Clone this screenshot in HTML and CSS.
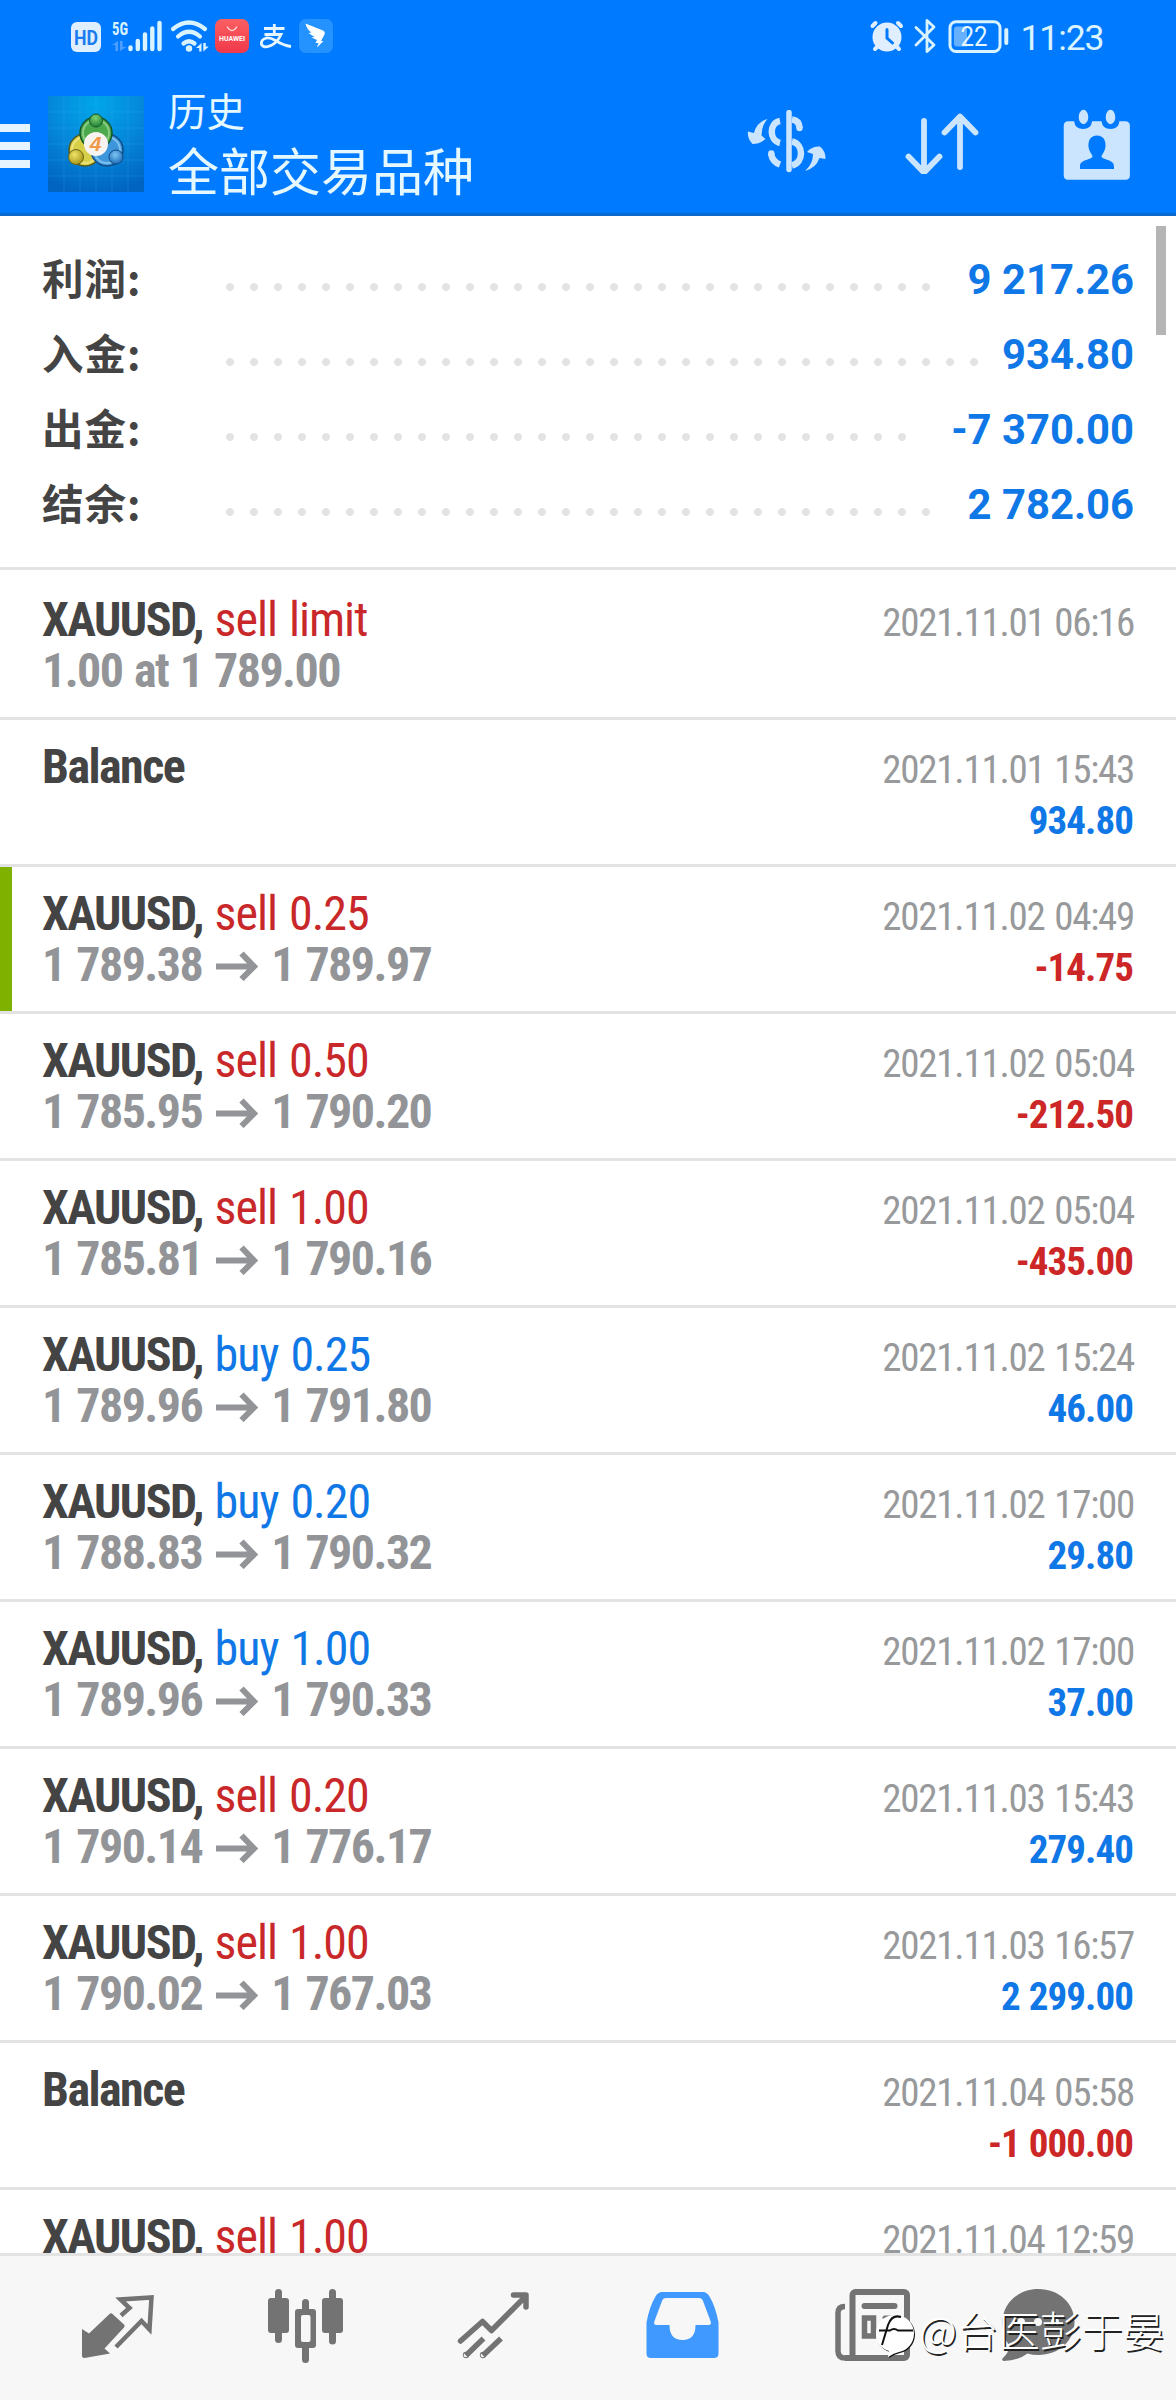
FILE: index.html
```html
<!DOCTYPE html>
<html lang="zh-CN">
<head>
<meta charset="utf-8">
<title>历史</title>
<link rel="stylesheet" href="styles.css">
</head>
<body>
<div class="screen">
  <header class="top">
    <div class="statusbar">
      <svg class="status-left" viewBox="60 10 290 54" width="290" height="54">
        <defs>
          <linearGradient id="red" x1="0" y1="0" x2="0" y2="1"><stop offset="0" stop-color="#fb5f62"/><stop offset="1" stop-color="#f0384a"/></linearGradient>
        </defs>
        <rect x="71" y="22" width="30" height="30" rx="6" fill="#e0efff"/>
        <text x="86" y="44.5" class="t-hd" textLength="24" lengthAdjust="spacingAndGlyphs">HD</text>
        <text x="112" y="34.5" class="t-5g" textLength="16" lengthAdjust="spacingAndGlyphs">5G</text>
        <g fill="#4c9fff"><path d="M112 45l6-4v10h-2.600v-6zM120 41h2.600v6h4l-6.600 4z"/></g>
        <g stroke="#d9f3ff" stroke-width="4.400" stroke-linecap="round">
          <path d="M130.500 47.500v1.500M137.800 41v8M145 34.500v14.500M152.300 28.500v20.500M159.500 23v26"/>
        </g>
        <g fill="none" stroke="#d9f3ff" stroke-width="4.200" stroke-linecap="round">
          <path d="M173 29q16-13 32 0M178 36.500q11-9.500 22 0M183.500 43.500q5.500-4.500 11 0"/>
        </g>
        <circle cx="189" cy="48.500" r="3.200" fill="#d9f3ff"/>
        <path d="M196 48l5.500-5v8.500h-2.300v-3.500zM203.300 43v8.500l5.500-5h-3v-3.500z" fill="#d9f3ff"/>
        <rect x="215" y="19" width="34" height="34" rx="7" fill="url(#red)"/>
        <path d="M227 26.500q5 8 10 0" fill="none" stroke="#ffe0e0" stroke-width="1.300"/>
        <text x="232" y="41" class="t-hw" textLength="26" lengthAdjust="spacingAndGlyphs">HUAWEI</text>
        <g fill="none" stroke="#e6f6ff" stroke-width="2.800">
          <path d="M264 28.500h20.500M274.300 24v10M264.500 34.500h16.500q-3 7-9 10.500-8 4-10.500-.500-1-5 5-6.500 4-.500 9 2.500 8 5 15.500 6" />
        </g>
        <rect x="299" y="19" width="34" height="34" rx="7" fill="#2493ff"/>
        <path d="M305.500 23.500l17.500 7q2.500 1.500 1.500 4l-3.500 6.500h2.500l-6.500 6.500 1.500-4.500h-3l1.500-3-5.500-2.500 3-.500-6-4 3-.5q-5-3.500-6-9z" fill="#fff"/>
      </svg>
      <svg class="status-right" viewBox="860 10 250 54" width="250" height="54">
        <g fill="none" stroke="#e0efff" stroke-width="4" stroke-linecap="round"><path d="M872.500 26l3-3M901 26l-3-3M875 49l3-3M899 49l-3-3"/></g>
        <circle cx="887" cy="37" r="14.500" fill="#e0efff"/>
        <path d="M887 29.500v8.500l5.500 5" fill="none" stroke="#007aff" stroke-width="3" stroke-linecap="round"/>
        <path d="M916 27.500l18 17.500-7 6.500v-31l7 6.500-18 18" fill="none" stroke="#d9f3ff" stroke-width="2.800" stroke-linecap="round" stroke-linejoin="round"/>
        <rect x="950" y="21.700" width="50" height="29.800" rx="6" fill="none" stroke="#d9f3ff" stroke-width="3"/>
        <path d="M967 26.500h-10q-3 0-3 3v14q0 3 3 3h10z" fill="#66b0ff"/>
        <rect x="1004.300" y="28" width="4" height="17" rx="2" fill="#d9f3ff"/>
        <text x="974" y="45.500" class="t-batt" textLength="27" lengthAdjust="spacingAndGlyphs">22</text>
        <text x="1020.500" y="50" class="t-clock" textLength="84" lengthAdjust="spacing">11:23</text>
      </svg>
    </div>
    <div class="titlebar">
      <div class="burger"><i></i><i></i><i></i></div>
      <svg class="logo" viewBox="0 0 96 96" width="96" height="96">
        <defs>
          <radialGradient id="bg" cx=".5" cy=".08" r=".95"><stop offset="0" stop-color="#00a6ea"/><stop offset=".5" stop-color="#0588da"/><stop offset="1" stop-color="#0064c0"/></radialGradient>
          <radialGradient id="g" cx=".45" cy=".3" r=".7"><stop offset="0" stop-color="#7fd070"/><stop offset="1" stop-color="#1f8035"/></radialGradient>
          <radialGradient id="y" cx=".4" cy=".35" r=".7"><stop offset="0" stop-color="#eee36a"/><stop offset="1" stop-color="#a39312"/></radialGradient>
          <radialGradient id="b" cx=".45" cy=".35" r=".7"><stop offset="0" stop-color="#7cc4f2"/><stop offset="1" stop-color="#1768b5"/></radialGradient>
        </defs>
        <rect width="96" height="96" fill="url(#bg)"/>
        <path d="M16 0v96M32 0v96M48 0v96M64 0v96M80 0v96M0 16h96M0 32h96M0 48h96M0 64h96M0 80h96" stroke="#3bb4ee" stroke-opacity=".2"/>
        <circle cx="37" cy="54" r="16" fill="#d8cf48" stroke="#57591c" stroke-width="1.500"/>
        <circle cx="37" cy="54" r="13" fill="none" stroke="#e9e27a" stroke-width="2"/>
        <circle cx="59" cy="54" r="16" fill="#3d96dc" stroke="#104c85" stroke-width="1.500"/>
        <circle cx="59" cy="54" r="13" fill="none" stroke="#7cc0ee" stroke-width="2"/>
        <circle cx="48" cy="37" r="16" fill="#4aa94a" stroke="#14582c" stroke-width="1.500"/>
        <circle cx="48" cy="37" r="13" fill="none" stroke="#8acb83" stroke-width="2"/>
        <circle cx="48" cy="24.500" r="6.500" fill="url(#g)" stroke="#14582c"/>
        <circle cx="28" cy="61" r="7.500" fill="url(#y)" stroke="#6b651c"/>
        <circle cx="68" cy="61" r="7" fill="url(#b)" stroke="#104c85"/>
        <circle cx="48" cy="48" r="12" fill="#f6f3f0"/>
        <text x="47.500" y="55" class="t-four">4</text>
      </svg>
      <div class="titles">
        <div class="title-small">历史</div>
        <div class="title-large">全部交易品种</div>
      </div>
      <div class="actions">
        <svg viewBox="0 0 80 64" width="80" height="64" fill="none" stroke="#cce5ff">
          <path d="M43 2.500v57" stroke-width="5.500" stroke-linecap="round"/>
          <path d="M34 11c-11 2-11 19.500 0 22M25 43.500q1.500 8.500 9 11" stroke-width="6.500"/>
          <path d="M46 9.500q7.500 1 7.500 8.500M46 31.500c12 2.500 12 21 0 24" stroke-width="6.500"/>
          <circle cx="25.300" cy="43.500" r="3.200" fill="#cce5ff" stroke="none"/><circle cx="53.500" cy="18" r="3.200" fill="#cce5ff" stroke="none"/>
          <path d="M21.500 9q-11 3-13.500 14l-6-1.500q-1 7 4.500 12.500 7 0 13-5l-4-3.500q0-10 6-16.500z" fill="#cce5ff" stroke="none"/>
          <path d="M59 61q8-7 8-17l-6-2q5-6 13-5.500 6 5 5.500 12.500l-6-1q-3.500 10-14.500 13z" fill="#cce5ff" stroke="none"/>
        </svg>
        <svg viewBox="0 0 80 64" width="80" height="64" fill="none" stroke="#cce5ff" stroke-width="5.800" stroke-linecap="round" stroke-linejoin="round">
          <path d="M22 11v51M6.500 46.500l15.500 16 15.500-16M58 57V7M42.500 22.500L58 6.500l15.500 16"/>
        </svg>
        <svg viewBox="0 0 80 76" width="80" height="76">
          <path d="M10 15.500h6q1 8.500 9.500 8.500t9.500-8.500h10q1 8.500 9.500 8.500t9.500-8.500h6q5 0 5 5v54q0 4.500-4.500 4.500h-61q-4.500 0-4.500-4.500v-54q0-5 5-5z" fill="#cce5ff" transform="translate(1 3) scale(.945 .92)"/>
          <ellipse cx="25.500" cy="13" rx="4.800" ry="7.200" fill="#cce5ff"/><ellipse cx="52.500" cy="13" rx="4.800" ry="7.200" fill="#cce5ff"/>
          <path d="M39 31.500c6.500 0 9 5 8.500 11.500-.500 4-3 7-4 9-.500 4 12.500 3 12.500 10v3h-34v-3c0-7 13-6 12.500-10-1-2-3.500-5-4-9-.500-6.500 2-11.500 8.500-11.500z" fill="#007aff"/>
        </svg>
      </div>
    </div>
  </header>

  <main class="list">
    <section class="summary">
      <div class="sum"><span class="label">利润:</span><i class="dots" style="--n:30"></i><b>9 217.26</b></div>
      <div class="sum"><span class="label">入金:</span><i class="dots" style="--n:32"></i><b>934.80</b></div>
      <div class="sum"><span class="label">出金:</span><i class="dots" style="--n:29"></i><b>-7 370.00</b></div>
      <div class="sum"><span class="label">结余:</span><i class="dots" style="--n:30"></i><b>2 782.06</b></div>
    </section>
    <svg class="defs"><symbol id="arr" viewBox="0 0 42 30"><path d="M0 15.500h37M25.500 2.500L38 15.500l-12.500 12.500" fill="none" stroke="#929497" stroke-width="6"/></symbol></svg>

    <article class="row order"><div class="line"><b>XAUUSD, <em class="neg">sell limit</em></b><time>2021.11.01 06:16</time></div><div class="line"><span class="price">1.00 at 1 789.00</span></div></article>
    <article class="row"><div class="line"><b>Balance</b><time>2021.11.01 15:43</time></div><div class="line end"><span class="amt">934.80</span></div></article>
    <article class="row marked"><div class="line"><b>XAUUSD, <em class="neg">sell 0.25</em></b><time>2021.11.02 04:49</time></div><div class="line"><span class="price">1 789.38<svg><use href="#arr"/></svg>1 789.97</span><span class="amt neg">-14.75</span></div></article>
    <article class="row"><div class="line"><b>XAUUSD, <em class="neg">sell 0.50</em></b><time>2021.11.02 05:04</time></div><div class="line"><span class="price">1 785.95<svg><use href="#arr"/></svg>1 790.20</span><span class="amt neg">-212.50</span></div></article>
    <article class="row"><div class="line"><b>XAUUSD, <em class="neg">sell 1.00</em></b><time>2021.11.02 05:04</time></div><div class="line"><span class="price">1 785.81<svg><use href="#arr"/></svg>1 790.16</span><span class="amt neg">-435.00</span></div></article>
    <article class="row"><div class="line"><b>XAUUSD, <em>buy 0.25</em></b><time>2021.11.02 15:24</time></div><div class="line"><span class="price">1 789.96<svg><use href="#arr"/></svg>1 791.80</span><span class="amt">46.00</span></div></article>
    <article class="row"><div class="line"><b>XAUUSD, <em>buy 0.20</em></b><time>2021.11.02 17:00</time></div><div class="line"><span class="price">1 788.83<svg><use href="#arr"/></svg>1 790.32</span><span class="amt">29.80</span></div></article>
    <article class="row"><div class="line"><b>XAUUSD, <em>buy 1.00</em></b><time>2021.11.02 17:00</time></div><div class="line"><span class="price">1 789.96<svg><use href="#arr"/></svg>1 790.33</span><span class="amt">37.00</span></div></article>
    <article class="row"><div class="line"><b>XAUUSD, <em class="neg">sell 0.20</em></b><time>2021.11.03 15:43</time></div><div class="line"><span class="price">1 790.14<svg><use href="#arr"/></svg>1 776.17</span><span class="amt">279.40</span></div></article>
    <article class="row"><div class="line"><b>XAUUSD, <em class="neg">sell 1.00</em></b><time>2021.11.03 16:57</time></div><div class="line"><span class="price">1 790.02<svg><use href="#arr"/></svg>1 767.03</span><span class="amt">2 299.00</span></div></article>
    <article class="row"><div class="line"><b>Balance</b><time>2021.11.04 05:58</time></div><div class="line end"><span class="amt neg">-1 000.00</span></div></article>
    <article class="row"><div class="line"><b>XAUUSD, <em class="neg">sell 1.00</em></b><time>2021.11.04 12:59</time></div></article>
    <div class="scrollbar"></div>
  </main>

  <nav class="tabs">
    <svg viewBox="24 2256 188 144">
      <path d="M82 2329l7 4.500 20.500-19.500q1.500-1.500 3 0l11.500 10.500q1.500 1.500 0 3l-19.500 21 5.500 5-25.500 4.500q-2.500 0-2.500-2.500z" fill="#737373"/>
      <path d="M121 2315.500l8.500-7.500-9-8.500 31-2-2 32-8-8.500-25.500 26" fill="none" stroke="#737373" stroke-width="4.500"/>
    </svg>
    <svg viewBox="212 2256 188 144" fill="#737373">
      <rect x="275" y="2289" width="7" height="54" rx="3.500"/><rect x="268" y="2298" width="21" height="35" rx="3"/>
      <rect x="302" y="2299" width="7" height="64" rx="3.500"/><rect x="295" y="2309" width="21" height="39" rx="3"/><rect x="301" y="2315" width="9.500" height="27" rx="2" fill="#f7f7f7"/>
      <rect x="329" y="2289" width="7" height="55.500" rx="3.500"/><rect x="322" y="2298" width="21" height="35" rx="3"/>
    </svg>
    <svg viewBox="400 2256 188 144" fill="none" stroke="#737373" stroke-width="5.500">
      <path d="M460.500 2341l22-19.500 9 9 34-34M513.500 2295h12.500v12" stroke-linecap="round" stroke-linejoin="round"/>
      <path d="M466 2355.500l17.500-17M483 2355.500l18-17"/><circle cx="466" cy="2355" r=".4"/><circle cx="483" cy="2355" r=".4"/>
    </svg>
    <svg viewBox="588 2256 188 144">
      <path fill-rule="evenodd" d="M662 2292h41q4 0 6.500 4.500 6 10 9 26v31q0 4.500-4.500 4.500h-63q-4.500 0-4.500-4.500v-31q3-16 9-26 2.500-4.500 6.500-4.500zM666 2298q-3 0-4 3l-7.500 20q-1.500 4 2 4h13q0 15 13 15t13-15h13q3.500 0 2-4l-7.500-20q-1-3-4-3z" fill="#4099ff"/>
    </svg>
    <svg viewBox="776 2256 188 144">
      <path d="M845 2306.500q-7 0-7 6.500v38q0 7 7 7h12" fill="none" stroke="#737373" stroke-width="5.500"/>
      <rect x="852.500" y="2292" width="54.500" height="66" rx="3" fill="none" stroke="#737373" stroke-width="6"/>
      <path d="M845 2358h12" stroke="#737373" stroke-width="6"/>
      <rect x="861.500" y="2303" width="36" height="6" rx="3" fill="#737373"/>
      <rect x="864.500" y="2318" width="9" height="18" fill="none" stroke="#737373" stroke-width="5.500"/>
      <path d="M885 2318h10M885 2327h12M885 2336h12" stroke="#737373" stroke-width="5" stroke-linecap="round"/>
    </svg>
    <svg viewBox="964 2256 188 144">
      <path d="M1038.500 2289c20 0 36 14 36 33s-16 33-36 33q-6 0-11-1.500-10 7.500-24 7.500-2.500-1-.5-3 5.500-5 6.500-12-7-9-7-24c0-19 16-33 36-33z" fill="#737373"/>
      <g fill="#f7f7f7"><circle cx="1021" cy="2322" r="4"/><circle cx="1038" cy="2322" r="4"/><circle cx="1055" cy="2322" r="4"/></g>
    </svg>
  </nav>
  <div class="watermark">
    <svg viewBox="0 0 42 46" width="42" height="46">
      <path d="M21 3c11 0 19 8 19 18.500S32 39 25 40q-5 1-11 5l1-6C7 37 2 30 2 21.500 2 11 10 3 21 3z" fill="#111" transform="translate(1 1)"/>
      <path d="M21 3c11 0 19 8 19 18.500S32 39 25 40q-5 1-11 5l1-6C7 37 2 30 2 21.500 2 11 10 3 21 3z" fill="#fff"/>
      <path d="M27 5q-9-3-13 8L8 33M5 18.500h11q4-3 8 0h15" fill="none" stroke="#111" stroke-width="2"/>
    </svg>
    <span>@台医彭于晏</span>
  </div>
</div>
</body>
</html>
```
FILE: styles.css
```css
* { box-sizing: border-box; }
body { margin: 0; background: #fff; }
.screen {
  position: relative;
  width: 1176px;
  height: 2400px;
  display: flex;
  flex-direction: column;
  overflow: hidden;
  font-family: "Roboto Condensed", Roboto, "Noto Sans CJK SC", sans-serif;
}

/* header */
.top { height: 216px; background: #007aff; border-bottom: 3px solid #0b68cc; flex: none; }
.statusbar { height: 74px; padding: 10px 66px 0 60px; display: flex; justify-content: space-between; }
.titlebar { height: 139px; display: flex; align-items: flex-start; }
.t-hd { font: 700 21px Roboto, sans-serif; fill: #1a7cf0; text-anchor: middle; }
.t-5g { font: 700 18px "Roboto Condensed", Roboto, sans-serif; fill: #d9f3ff; }
.t-hw { font: 700 8px Roboto, sans-serif; fill: #fff; text-anchor: middle; }
.t-batt { font: 400 27px Roboto, sans-serif; fill: #e6f6ff; text-anchor: middle; }
.t-clock { font: 400 35.5px Roboto, sans-serif; fill: #d9f3ff; }
.t-four { font: italic 700 21px "Liberation Sans", sans-serif; fill: #ee9a4a; text-anchor: middle; }
.burger { width: 30px; margin: 50px 18px 0 0; display: flex; flex-direction: column; gap: 10px; }
.burger i { height: 8px; background: #e6f4ff; }
.logo { margin-top: 22px; }
.titles { margin: 10px 0 0 24px; color: #e6f8ff; font-family: "Noto Sans CJK SC", sans-serif; font-weight: 400; white-space: nowrap; }
.title-small { font-size: 38.5px; line-height: 50px; }
.title-large { font-size: 51px; line-height: 70px; }
.actions { margin-left: auto; padding: 36px 38px 0 0; display: flex; gap: 76px; }
.actions svg:last-child { margin-top: -6px; }

/* list */
.list { position: relative; flex: 1; overflow: hidden; }
.defs { display: none; }
.scrollbar { position: absolute; left: 1156px; top: 10px; width: 10px; height: 109px; background: #b5b5b5; }
.summary { height: 354px; padding: 26px 42px 0; border-bottom: 3px solid #e3e3e3; }
.sum { height: 75px; display: flex; align-items: center; }
.label { width: 176px; font: 700 41.5px/75px "Noto Sans CJK SC", sans-serif; color: #444; white-space: nowrap; margin-top: -5px; letter-spacing: 1px; }
.dots {
  width: calc(var(--n) * 24px);
  height: 8px;
  margin-top: 15px;
  background: radial-gradient(circle at 12px 4px, #e3e3e3 3.6px, transparent 4.2px) 0 0 / 24px 8px;
}
.sum b { margin-left: auto; font: 700 41.8px/75px Roboto, sans-serif; color: #0f78e6; }

.row { height: 147px; padding: 21px 42px 0; border-bottom: 3px solid #e3e3e3; }
.row.order { height: 150px; padding-top: 24px; }
.row.marked { box-shadow: inset 12px 0 #7fb200; }
.line { height: 51px; display: flex; align-items: baseline; justify-content: space-between; line-height: 51px; white-space: nowrap; }
.line.end { justify-content: flex-end; padding-top: 4px; }
.line b, .price { font-size: 48px; font-weight: 700; letter-spacing: -1.55px; word-spacing: 2px; }
.line b { color: #444; }
.line em { font-style: normal; font-weight: 400; color: #0f78e6; letter-spacing: -1px; }
.line em.neg { color: #c9282a; }
.price { color: #929497; }
.price svg { width: 42px; height: 30px; margin: 0 13px 0 14px; vertical-align: 0; }
.line time { font-size: 39px; color: #97999b; letter-spacing: -1.25px; word-spacing: 2px; }
.amt { font-size: 39px; font-weight: 700; color: #0f78e6; letter-spacing: -.95px; word-spacing: 1px; margin-right: 1px; }
.amt.neg { color: #cc2627; }

/* bottom tabs */
.tabs { height: 147px; flex: none; background: #f7f7f7; border-top: 3px solid #e3e3e3; padding: 0 24px; display: flex; }
.tabs svg { width: 188px; height: 144px; flex: none; }

.watermark { position: absolute; left: 874px; top: 2299px; display: flex; align-items: center; gap: 3px; color: #fff; }
.watermark svg { margin-top: 11px; }
.watermark span { font: 300 41.5px/60px "Noto Sans CJK SC", sans-serif; text-shadow: 1.5px 1.5px 0 #222; white-space: nowrap; }
```
